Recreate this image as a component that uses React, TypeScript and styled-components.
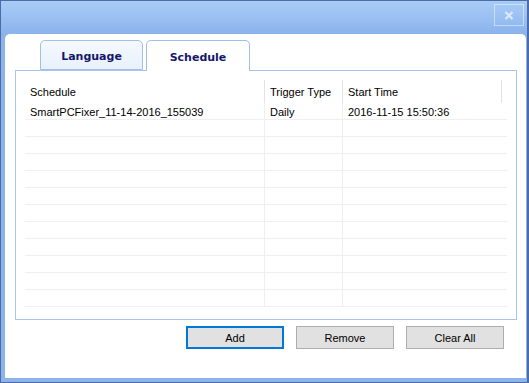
import { createGlobalStyle, styled } from 'styled-components';

const GlobalStyle = createGlobalStyle`
  html, body {
    margin: 0;
    padding: 0;
    background: #ffffff;
  }
  * {
    box-sizing: border-box;
  }
`;

const Window = styled.div`
  width: 529px;
  height: 383px;
  display: flex;
  flex-direction: column;
  border: 1px solid #4b6ca8;
  border-right-width: 2px;
  background: #8db4ea;
  font-family: 'Liberation Sans', Arial, sans-serif;
  font-size: 11px;
  color: #000;
`;

const TitleBar = styled.div`
  height: 33px;
  flex: none;
  display: flex;
  justify-content: flex-end;
  align-items: flex-start;
  padding: 3px 3px 0 0;
  background: linear-gradient(#a9cbf6, #99bff2 55%, #8ab3ec);
`;

const CloseButton = styled.div`
  width: 30px;
  height: 22px;
  display: flex;
  align-items: center;
  justify-content: center;
  border: 1px solid rgba(255, 255, 255, 0.45);
`;

const Body = styled.div`
  flex: 1;
  display: flex;
  padding: 0 4px 4px 4px;
`;

const Panel = styled.div`
  flex: 1;
  display: flex;
  flex-direction: column;
  background: #ffffff;
  border-radius: 5px 5px 0 0;
  padding: 6px 9px 0 10px;
`;

const TabRow = styled.div`
  display: flex;
  gap: 3px;
  margin-left: 25px;
  height: 30px;
  position: relative;
  z-index: 1;
`;

const Tab = styled.div<{ $active?: boolean; $width: number }>`
  width: ${(p) => p.$width}px;
  height: ${(p) => (p.$active ? 31 : 30)}px;
  display: flex;
  align-items: center;
  justify-content: center;
  border: 1px solid #9fc0e9;
  border-bottom: ${(p) => (p.$active ? 'none' : '1px solid #9fc0e9')};
  border-radius: 5px 5px 0 0;
  background: ${(p) =>
    p.$active ? '#ffffff' : 'linear-gradient(#f5f9fe, #e8f1fc)'};
  font-family: 'DejaVu Sans', Verdana, sans-serif;
  font-weight: bold;
  font-size: 11px;
  color: #16166c;
  padding-top: 2px;
`;

const Frame = styled.div`
  height: 250px;
  border: 1px solid #a9c5e9;
  padding: 9px;
`;

const List = styled.div`
  display: grid;
  grid-template-columns: 240px 78px 159px 1fr;
`;

const HeaderCell = styled.div<{ $last?: boolean }>`
  height: 23px;
  display: flex;
  align-items: center;
  padding-left: ${(p) => (p.$last ? 0 : 5)}px;
  border-right: ${(p) => (p.$last ? 'none' : '1px solid #e3e3e3')};
`;

const Cell = styled.div<{ $line?: boolean }>`
  height: 17px;
  display: flex;
  align-items: center;
  padding: 2px 0 0 5px;
  white-space: nowrap;
  border-bottom: 1px solid #efefef;
  border-right: ${(p) => (p.$line ? '1px solid #efefef' : 'none')};
`;

const ButtonRow = styled.div`
  display: flex;
  justify-content: flex-end;
  gap: 12px;
  padding: 6px 13px 0 0;
`;

const Button = styled.div<{ $focused?: boolean }>`
  width: 98px;
  height: 23px;
  display: flex;
  align-items: center;
  justify-content: center;
  background: #e1e1e1;
  border: ${(p) => (p.$focused ? '2px solid #0078d7' : '1px solid #adadad')};
  font-size: 11px;
`;

type Row = { name: string; trigger: string; start: string };

const rows: Row[] = [
  { name: 'SmartPCFixer_11-14-2016_155039', trigger: 'Daily', start: '2016-11-15 15:50:36' },
];

const ROW_COUNT = 12;

export default function App() {
  const filled: (Row | null)[] = Array.from({ length: ROW_COUNT }, (_, i) => rows[i] ?? null);

  return (
    <>
      <GlobalStyle />
      <Window>
        <TitleBar>
          <CloseButton>
            <svg width="10" height="9" viewBox="0 0 10 9">
              <path d="M1.5 1 L8.5 8 M8.5 1 L1.5 8" stroke="#dde9f9" strokeWidth="2.2" />
            </svg>
          </CloseButton>
        </TitleBar>
        <Body>
          <Panel>
            <TabRow>
              <Tab $width={103}>Language</Tab>
              <Tab $width={104} $active>
                Schedule
              </Tab>
            </TabRow>
            <Frame>
              <List>
                <HeaderCell>Schedule</HeaderCell>
                <HeaderCell>Trigger Type</HeaderCell>
                <HeaderCell>Start Time</HeaderCell>
                <HeaderCell $last />
                {filled.map((r, i) => [
                  <Cell key={`a${i}`} $line>{r?.name}</Cell>,
                  <Cell key={`b${i}`} $line>{r?.trigger}</Cell>,
                  <Cell key={`c${i}`}>{r?.start}</Cell>,
                  <Cell key={`d${i}`} />,
                ])}
              </List>
            </Frame>
            <ButtonRow>
              <Button $focused>Add</Button>
              <Button>Remove</Button>
              <Button>Clear All</Button>
            </ButtonRow>
          </Panel>
        </Body>
      </Window>
    </>
  );
}
